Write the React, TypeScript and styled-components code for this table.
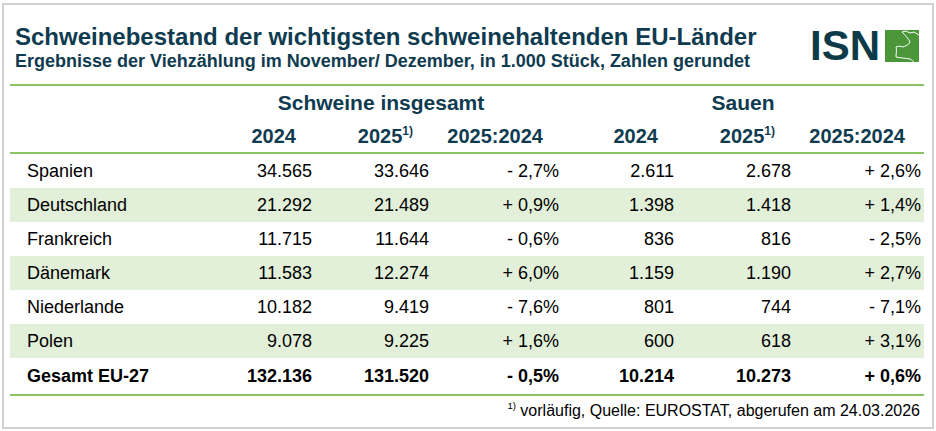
import React from "react";
import styled, { createGlobalStyle } from "styled-components";

const GlobalStyle = createGlobalStyle`
  html, body {
    margin: 0;
    padding: 0;
    background: #ffffff;
    font-family: "Liberation Sans", Arial, sans-serif;
  }
`;

const Frame = styled.main`
  box-sizing: border-box;
  width: 932px;
  height: 426px;
  margin: 3px 0 0 2px;
  border: 2px solid #cfcfcf;
  padding: 0 8px 0 6px;
  display: flex;
  flex-direction: column;
`;

const Header = styled.header`
  display: flex;
  justify-content: space-between;
  align-items: flex-start;
  padding: 19px 0 0 5px;
  height: 60px;
  border-bottom: 2px solid #8cc267;
`;

const Titles = styled.div`
  display: flex;
  flex-direction: column;
  color: #0f3b50;
  font-weight: bold;
`;

const Title = styled.h1`
  margin: 0;
  font-size: 24px;
  line-height: 26px;
`;

const Subtitle = styled.h2`
  margin: 0;
  font-size: 18px;
  line-height: 22px;
`;

const Logo = styled.div`
  display: flex;
  align-items: center;
  gap: 5px;
  margin: 6px 5px 0 0;
`;

const LogoText = styled.span`
  font-size: 42px;
  font-weight: bold;
  color: #0d3a48;
  line-height: 32px;
`;

const Grid = styled.div`
  display: grid;
  grid-template-columns: 190px 115px 117px 130px 115px 117px 130px;
`;

const GroupRow = styled(Grid)`
  height: 34px;
  align-items: center;
`;

const YearRow = styled(Grid)`
  height: 32px;
  align-items: center;
  border-bottom: 2px solid #8cc267;
`;

const GroupCell = styled.div`
  grid-column: span 3;
  text-align: center;
  font-size: 21px;
  font-weight: bold;
  color: #0f3b50;
`;

const HeadCell = styled.div`
  text-align: right;
  padding-right: 19px;
  font-size: 20px;
  font-weight: bold;
  color: #0f3b50;
`;

const Sup = styled.sup`
  font-size: 0.6em;
  vertical-align: 0.7em;
  line-height: 0;
`;

const Row = styled(Grid)<{ $striped?: boolean; $total?: boolean }>`
  height: ${(p) => (p.$total ? "36px" : "34px")};
  align-items: center;
  background: ${(p) => (p.$striped ? "#e2efd9" : "transparent")};
  font-size: 18px;
  font-weight: ${(p) => (p.$total ? "bold" : "normal")};
  color: #000;
  border-bottom: ${(p) => (p.$total ? "2px solid #8cc267" : "none")};
`;

const Label = styled.div`
  padding-left: 17px;
`;

const Num = styled.div`
  text-align: right;
  padding-right: 3px;
`;

const Footnote = styled.footer`
  text-align: right;
  font-size: 16px;
  padding: 6px 4px 0 0;
  color: #000;
`;

const rows = [
  ["Spanien", "34.565", "33.646", "- 2,7%", "2.611", "2.678", "+ 2,6%"],
  ["Deutschland", "21.292", "21.489", "+ 0,9%", "1.398", "1.418", "+ 1,4%"],
  ["Frankreich", "11.715", "11.644", "- 0,6%", "836", "816", "- 2,5%"],
  ["Dänemark", "11.583", "12.274", "+ 6,0%", "1.159", "1.190", "+ 2,7%"],
  ["Niederlande", "10.182", "9.419", "- 7,6%", "801", "744", "- 7,1%"],
  ["Polen", "9.078", "9.225", "+ 1,6%", "600", "618", "+ 3,1%"],
];

const total = ["Gesamt EU-27", "132.136", "131.520", "- 0,5%", "10.214", "10.273", "+ 0,6%"];

function PigMark() {
  return (
    <svg width="34" height="32" viewBox="0 0 34 32">
      <rect width="34" height="32" fill="#4a9638" />
      <path
        d="M17 2 L21 1 L25 3 L29 2 L34 5"
        fill="none"
        stroke="#ffffff"
        strokeWidth="1"
      />
      <path
        d="M17 2 C20 5 23 8 25 12 C24 15 20 16 18 17 C16 16 13 16 11 17 C12 20 11 23 11 27 C15 28 20 28 25 29 C27 30 29 32 29 32"
        fill="none"
        stroke="#ffffff"
        strokeWidth="1"
      />
    </svg>
  );
}

export default function App() {
  return (
    <>
      <GlobalStyle />
      <Frame>
        <Header>
          <Titles>
            <Title>Schweinebestand der wichtigsten schweinehaltenden EU-Länder</Title>
            <Subtitle>Ergebnisse der Viehzählung im November/ Dezember, in 1.000 Stück, Zahlen gerundet</Subtitle>
          </Titles>
          <Logo>
            <LogoText>ISN</LogoText>
            <PigMark />
          </Logo>
        </Header>
        <GroupRow>
          <div />
          <GroupCell>Schweine insgesamt</GroupCell>
          <GroupCell>Sauen</GroupCell>
        </GroupRow>
        <YearRow>
          <div />
          <HeadCell>2024</HeadCell>
          <HeadCell>
            2025<Sup>1)</Sup>
          </HeadCell>
          <HeadCell>2025:2024</HeadCell>
          <HeadCell>2024</HeadCell>
          <HeadCell>
            2025<Sup>1)</Sup>
          </HeadCell>
          <HeadCell>2025:2024</HeadCell>
        </YearRow>
        {rows.map((r, i) => (
          <Row key={r[0]} $striped={i % 2 === 1}>
            <Label>{r[0]}</Label>
            {r.slice(1).map((v, j) => (
              <Num key={j}>{v}</Num>
            ))}
          </Row>
        ))}
        <Row $total>
          <Label>{total[0]}</Label>
          {total.slice(1).map((v, j) => (
            <Num key={j}>{v}</Num>
          ))}
        </Row>
        <Footnote>
          <Sup>1)</Sup> vorläufig, Quelle: EUROSTAT, abgerufen am 24.03.2026
        </Footnote>
      </Frame>
    </>
  );
}
